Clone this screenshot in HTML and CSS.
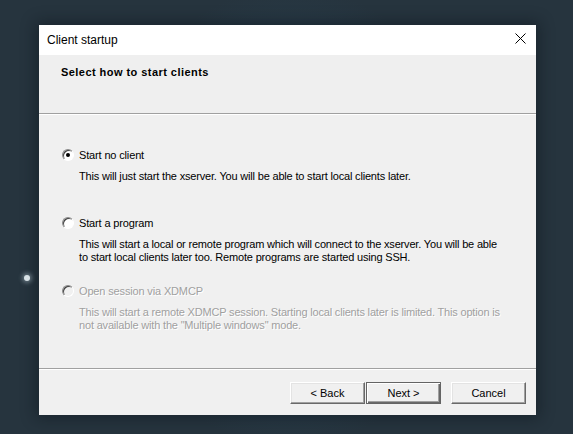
FILE: index.html
```html
<!DOCTYPE html>
<html>
<head>
<meta charset="utf-8">
<link rel="stylesheet" href="styles.css">
</head>
<body>
<div class="desktop">
  <span class="star"></span>
  <div class="dialog">
    <div class="titlebar">
      <span class="title">Client startup</span>
      <svg class="close" width="11" height="11" viewBox="0 0 11 11"><path d="M0.5 0.5 L10.5 10.5 M10.5 0.5 L0.5 10.5" stroke="#000" stroke-width="1" fill="none"/></svg>
    </div>
    <div class="header">
      <div class="heading">Select how to start clients</div>
    </div>
    <div class="sep"></div>
    <div class="content">
      <div class="option">
        <div class="row"><span class="radio checked"></span><span class="label">Start no client</span></div>
        <p class="desc">This will just start the xserver. You will be able to start local clients later.</p>
      </div>
      <div class="option">
        <div class="row"><span class="radio"></span><span class="label">Start a program</span></div>
        <p class="desc">This will start a local or remote program which will connect to the xserver. You will be able to start local clients later too. Remote programs are started using SSH.</p>
      </div>
      <div class="option disabled">
        <div class="row"><span class="radio"></span><span class="label">Open session via XDMCP</span></div>
        <p class="desc">This will start a remote XDMCP session. Starting local clients later is limited. This option is not available with the "Multiple windows" mode.</p>
      </div>
    </div>
    <div class="sep"></div>
    <div class="footer">
      <button class="btn">&lt; Back</button>
      <button class="btn default">Next &gt;</button>
      <button class="btn cancel">Cancel</button>
    </div>
  </div>
</div>
</body>
</html>
```
FILE: styles.css
```css
html, body {
  margin: 0;
  padding: 0;
  width: 573px;
  height: 434px;
  overflow: hidden;
}
body {
  background: #26343e;
  font-family: "Liberation Sans", Arial, sans-serif;
}
.desktop {
  position: relative;
  width: 573px;
  height: 434px;
  padding: 25px 0 0 39px;
  box-sizing: border-box;
  background:
    radial-gradient(ellipse 190px 230px at 290px 217px, #2c495b 0%, #293f4e 55%, rgba(38,52,62,0) 100%),
    #26343e;
}
.star {
  position: absolute;
  left: 24px;
  top: 275px;
  width: 6px;
  height: 6px;
  border-radius: 50%;
  background: #d8e2e6;
  box-shadow: 0 0 4px 2px rgba(180,200,210,0.45);
}
.dialog {
  width: 497px;
  height: 390px;
  background: #f0f0f0;
  box-shadow: 0 0 14px 3px rgba(10,18,24,0.45);
  display: flex;
  flex-direction: column;
}
.titlebar {
  height: 30px;
  background: #fff;
  display: flex;
  align-items: center;
  justify-content: space-between;
  padding: 0 10px 0 8px;
  flex: none;
}
.title {
  font-size: 12px;
  color: #000;
}
.close {
  display: block;
  margin-top: -3px;
}
.header {
  height: 58px;
  background: #efefef;
  box-sizing: border-box;
  padding: 10px 0 0 22px;
  flex: none;
}
.heading {
  font-size: 11px;
  font-weight: bold;
  letter-spacing: 0.45px;
  line-height: 14px;
  color: #000;
}
.sep {
  height: 1px;
  background: #a0a0a0;
  border-bottom: 1px solid #fff;
  flex: none;
}
.content {
  height: 253px;
  box-sizing: border-box;
  padding: 33px 0 0 23px;
  flex: none;
}
.option {
  height: 68px;
}
.row {
  display: flex;
  align-items: center;
  height: 14px;
}
.radio {
  width: 12px;
  height: 12px;
  box-sizing: border-box;
  border-radius: 50%;
  border: 1px solid;
  border-color: #8a8a8a #ffffff #ffffff #8a8a8a;
  box-shadow: inset 1px 1px 0 #404040;
  background: #fff;
  display: flex;
  align-items: center;
  justify-content: center;
  flex: none;
}
.radio.checked::after {
  content: "";
  width: 4px;
  height: 4px;
  border-radius: 50%;
  background: #000;
}
.disabled .radio {
  background: #f0f0f0;
}
.label {
  margin-left: 5px;
  font-size: 11px;
  letter-spacing: -0.15px;
  color: #000;
}
.desc {
  margin: 8px 0 0 17px;
  width: 424px;
  font-size: 11px;
  letter-spacing: -0.18px;
  line-height: 13px;
  color: #000;
}
.disabled .label, .disabled .desc {
  color: #a0a0a0;
  text-shadow: 1px 1px 0 #fff;
}
.footer {
  flex: 1;
  display: flex;
  align-items: flex-start;
  justify-content: flex-end;
  padding: 12px 10px 0 0;
}
.btn {
  width: 75px;
  height: 22px;
  box-sizing: border-box;
  margin: 0;
  padding: 0;
  font-family: "Liberation Sans", Arial, sans-serif;
  font-size: 11px;
  color: #000;
  background: #f0f0f0;
  border: 1px solid;
  border-color: #ffffff #696969 #696969 #ffffff;
  box-shadow: inset -1px -1px 0 #a0a0a0, inset 1px 1px 0 #e3e3e3;
}
.btn.default {
  border: 1px solid #646464;
  box-shadow: inset 1px 1px 0 #ffffff, inset -1px -1px 0 #696969, inset -2px -2px 0 #a0a0a0;
  margin-left: 1px;
}
.btn.cancel {
  margin-left: 10px;
}
```
